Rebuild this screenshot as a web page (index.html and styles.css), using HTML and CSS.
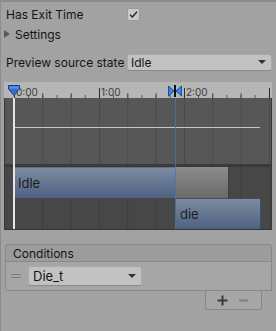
FILE: index.html
```html
<!DOCTYPE html>
<html lang="en">
<head>
    <meta charset="UTF-8">
    <meta name="viewport" content="width=device-width, initial-scale=1.0">
    <title>Transition Inspector</title>
<link rel="stylesheet" href="styles.css">
</head>
<body>
    <div class="inspector">
        <div class="row">
            <span class="label">Has Exit Time</span>
            <span class="checkbox">
                <svg width="11" height="11" viewBox="0 0 11 11"><path d="M2 5.6 L4.3 8 L9 2.8" fill="none" stroke="#1c1c1c" stroke-width="1.3"/></svg>
            </span>
        </div>

        <div class="row foldout">
            <span class="fold-arrow"></span>
            <span>Settings</span>
        </div>

        <div class="row preview">
            <span class="label">Preview source state</span>
            <div class="popup">
                <span>Idle</span>
                <span class="popup-arrow"></span>
            </div>
        </div>

        <!-- transition timeline -->
        <div class="timeline">
            <div class="ruler">
                <span class="time t0">0:00</span>
                <span class="time t1">1:00</span>
                <span class="time t2">2:00</span>
                <svg class="playhead-head" width="14" height="13" viewBox="0 0 14 13">
                    <path d="M1.5 1.5 H12.5 V5 L7 11.5 L1.5 5 Z" fill="#2f6fd6" stroke="#1c3f7a" stroke-width="1"/>
                    <path d="M2.5 2.5 H11.5 V4.5 H2.5 Z" fill="#5a95ec"/>
                </svg>
                <svg class="transition-mark" width="14" height="12" viewBox="0 0 14 12">
                    <path d="M0.5 1 L6 6 L0.5 11 Z" fill="#3a82e6" stroke="#1d4d96" stroke-width="1"/>
                    <path d="M13.5 1 L8 6 L13.5 11 Z" fill="#3a82e6" stroke="#1d4d96" stroke-width="1"/>
                    <rect x="6" y="0" width="2" height="12" fill="#111"/>
                </svg>
            </div>
            <div class="tracks">
                <div class="curve-zone">
                    <div class="curve"></div>
                </div>
                <div class="state-row">
                    <div class="clip idle">Idle</div>
                    <div class="blend"></div>
                </div>
                <div class="state-row lower">
                    <div class="clip die">die</div>
                </div>
                <div class="playhead"></div>
                <div class="transition-line"></div>
            </div>
        </div>

        <div class="conditions">
            <div class="list-header">Conditions</div>
            <div class="list-body">
                <div class="list-item">
                    <span class="drag-handle"></span>
                    <div class="popup small">
                        <span>Die_t</span>
                        <span class="popup-arrow"></span>
                    </div>
                </div>
            </div>
            <div class="list-footer">
                <svg width="11" height="11" viewBox="0 0 11 11"><path d="M5.5 0.5 V10.5 M0.5 5.5 H10.5" stroke="#3a3a3a" stroke-width="2"/></svg>
                <svg width="9" height="11" viewBox="0 0 9 11"><path d="M0 5.5 H9" stroke="#7e7e7e" stroke-width="2"/></svg>
            </div>
        </div>
    </div>
</body>
</html>
```

FILE: styles.css
```css
body {
    margin: 0;
    font-family: Inter, "Noto Sans", sans-serif;
    font-size: 12px;
    color: #141414;
    background-color: #a2a2a2;
}

.inspector {
    height: 331px;
    box-sizing: border-box;
    border-top: 2px solid #8c8c8c;
    border-left: 1px solid #8c8c8c;
    padding: 3px 4px 0 0;
}

.row {
    display: flex;
    align-items: center;
    height: 18px;
    padding-left: 5px;
    white-space: nowrap;
}

.label {
    width: 121px;
    flex-shrink: 0;
}

.checkbox {
    width: 11px;
    height: 11px;
    border: 1px solid #9a9a9a;
    border-radius: 2px;
    background-color: #c9c9c9;
    display: flex;
}

.foldout {
    margin-top: 2px;
    padding-left: 3px;
}

.fold-arrow {
    width: 0;
    height: 0;
    border-top: 4px solid transparent;
    border-bottom: 4px solid transparent;
    border-left: 6px solid #5a5a5a;
    margin-right: 5px;
}

.preview {
    margin-top: 10px;
}

.popup {
    flex: 1;
    height: 17px;
    box-sizing: border-box;
    display: flex;
    align-items: center;
    justify-content: space-between;
    padding: 0 5px 0 3px;
    background-color: #c2c2c2;
    border: 1px solid #a9a9a9;
    border-bottom-color: #8a8a8a;
    border-radius: 3px;
}

.popup-arrow {
    width: 0;
    height: 0;
    border-left: 4px solid transparent;
    border-right: 4px solid transparent;
    border-top: 4px solid #333;
}

/* timeline */

.timeline {
    margin: 11px 0 0 3px;
}

.ruler {
    position: relative;
    height: 16px;
    background-color: #b6b6b6;
    background-image:
        linear-gradient(to right, #2e2e2e 1px, transparent 1px),
        linear-gradient(to right, #4a4a4a 1px, transparent 1px),
        linear-gradient(to right, #5a5a5a 1px, transparent 1px);
    background-size: 85px 10px, 28.333px 5px, 14.1667px 3px;
    background-position: 10px 100%, 10px 100%, 10px 100%;
    background-repeat: repeat-x;
}

.time {
    position: absolute;
    top: 4px;
    font-size: 10px;
    color: #3c3c3c;
}

.t0 { left: 12px; }
.t1 { left: 97px; }
.t2 { left: 182px; }

.playhead-head {
    position: absolute;
    left: 3px;
    top: 2px;
}

.transition-mark {
    position: absolute;
    left: 164px;
    top: 3px;
}

.tracks {
    position: relative;
    border: 1px solid #363636;
    border-top: 0;
}

.curve-zone,
.state-row {
    background-image: linear-gradient(to right, rgba(0, 0, 0, 0.14) 1px, transparent 1px);
    background-size: 28.333px 100%;
    background-position: 9px 0;
    background-repeat: repeat-x;
}

.curve-zone {
    height: 66px;
    background-color: #575757;
    border-bottom: 3px solid #3a3a3a;
    overflow: hidden;
}

.curve {
    margin: 29px 0 0 10px;
    width: 245px;
    height: 1px;
    background-color: #c6c6c6;
}

.state-row {
    display: flex;
    height: 31px;
    background-color: #474747;
}

.clip {
    box-sizing: border-box;
    display: flex;
    align-items: center;
    padding-left: 4px;
    font-size: 13px;
    color: #1e1e1e;
    background-image: linear-gradient(#7d8ba0, #4d6182);
}

.idle {
    margin-left: 9px;
    width: 161px;
    border-top: 1px solid #5f6f88;
}

.blend {
    width: 54px;
    box-sizing: border-box;
    background-image: linear-gradient(#8c8c8c, #6a6a6a);
    border-right: 1px solid #3e3e3e;
}

.die {
    margin-left: 170px;
    width: 86px;
    border: 1px solid #3e4d66;
    border-bottom: 0;
}

.playhead {
    position: absolute;
    left: 8px;
    top: 0;
    bottom: 0;
    width: 2px;
    background-color: #e6e6e6;
}

.transition-line {
    position: absolute;
    left: 170px;
    top: 0;
    bottom: 0;
    width: 1px;
    background-color: rgba(80, 115, 170, 0.8);
}

/* conditions list */

.conditions {
    margin: 14px 0 0 4px;
    display: flex;
    flex-direction: column;
}

.list-header {
    height: 18px;
    box-sizing: border-box;
    padding-left: 7px;
    display: flex;
    align-items: center;
    background-color: #9c9c9c;
    border: 1px solid #888;
    border-radius: 3px 3px 0 0;
}

.list-body {
    height: 29px;
    box-sizing: border-box;
    border: 1px solid #888;
    border-top: 0;
    border-radius: 0 0 0 3px;
    background-color: #a6a6a6;
}

.list-item {
    display: flex;
    align-items: center;
    height: 28px;
    padding-left: 5px;
}

.drag-handle {
    width: 10px;
    height: 2px;
    border-top: 1px solid #7a7a7a;
    border-bottom: 1px solid #7a7a7a;
    margin-right: 7px;
}

.popup.small {
    flex: 0 0 auto;
    width: 114px;
    height: 20px;
    padding-left: 4px;
    font-size: 13px;
}

.list-footer {
    align-self: flex-end;
    width: 57px;
    height: 19px;
    box-sizing: border-box;
    margin-right: 10px;
    display: flex;
    align-items: center;
    justify-content: space-around;
    padding: 0 8px 0 6px;
    background-color: #a6a6a6;
    border: 1px solid #888;
    border-top: 0;
    border-radius: 0 0 3px 3px;
}
```
